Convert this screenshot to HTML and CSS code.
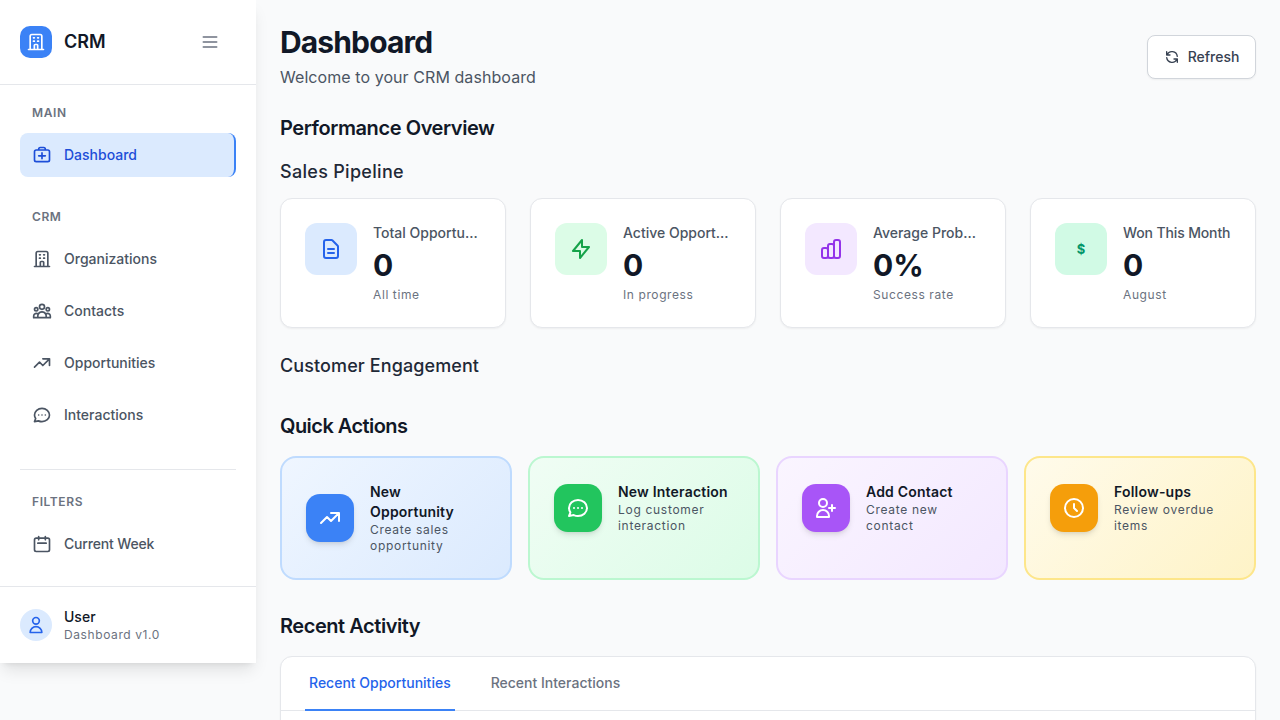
FILE: index.html
```html
<!DOCTYPE html>
<html lang="en">
<head>
<meta charset="utf-8">
<title>CRM Dashboard</title>
<link rel="stylesheet" href="styles.css">
</head>
<body>
<div class="app">
  <aside class="sidebar">
    <div class="brand">
      <div class="brand-left">
        <span class="logo"><svg class="i20" viewBox="0 0 24 24"><path d="M19 21V5a2 2 0 00-2-2H7a2 2 0 00-2 2v16m14 0h2m-2 0h-5m-9 0H3m2 0h5M9 7h1m-1 4h1m4-4h1m-1 4h1m-5 10v-5a1 1 0 011-1h2a1 1 0 011 1v5m-4 0h4"/></svg></span>
        <span class="brand-name">CRM</span>
      </div>
      <svg class="i20 menu" viewBox="0 0 24 24"><path d="M4 6h16M4 12h16M4 18h16"/></svg>
    </div>
    <nav class="nav">
      <div class="nav-label">MAIN</div>
      <a class="nav-item active"><svg class="i20" viewBox="0 0 24 24"><path d="M5 20h14a2 2 0 002-2V8a2 2 0 00-2-2H5a2 2 0 00-2 2v10a2 2 0 002 2zM16 6V5a2 2 0 00-2-2h-4a2 2 0 00-2 2v1M12 9.500v7M8 13h8"/></svg><span class="nav-text">Dashboard</span></a>
      <div class="nav-label crm">CRM</div>
      <a class="nav-item"><svg class="i20" viewBox="0 0 24 24"><path d="M19 21V5a2 2 0 00-2-2H7a2 2 0 00-2 2v16m14 0h2m-2 0h-5m-9 0H3m2 0h5M9 7h1m-1 4h1m4-4h1m-1 4h1m-5 10v-5a1 1 0 011-1h2a1 1 0 011 1v5m-4 0h4"/></svg><span class="nav-text">Organizations</span></a>
      <a class="nav-item"><svg class="i20" viewBox="0 0 24 24"><path d="M17 20h5v-2a3 3 0 00-5.356-1.857M17 20H7m10 0v-2c0-.656-.126-1.283-.356-1.857M7 20H2v-2a3 3 0 015.356-1.857M7 20v-2c0-.656.126-1.283.356-1.857m0 0a5.002 5.002 0 019.288 0M15 7a3 3 0 11-6 0 3 3 0 016 0zm6 3a2 2 0 11-4 0 2 2 0 014 0zM7 10a2 2 0 11-4 0 2 2 0 014 0z"/></svg><span class="nav-text">Contacts</span></a>
      <a class="nav-item"><svg class="i20" viewBox="0 0 24 24"><path d="M13 7h8m0 0v8m0-8l-8 8-4-4-6 6"/></svg><span class="nav-text">Opportunities</span></a>
      <a class="nav-item"><svg class="i20" viewBox="0 0 24 24"><path d="M8 12h.01M12 12h.01M16 12h.01M21 12c0 4.418-4.03 8-9 8a9.863 9.863 0 01-4.255-.949L3 20l1.395-3.72C3.512 15.042 3 13.574 3 12c0-4.418 4.03-8 9-8s9 3.582 9 8z"/></svg><span class="nav-text">Interactions</span></a>
      <div class="nav-sep"></div>
      <div class="nav-label">FILTERS</div>
      <a class="nav-item"><svg class="i20" viewBox="0 0 24 24"><path d="M8 7V3m8 4V3m-9 8h10M5 21h14a2 2 0 002-2V7a2 2 0 00-2-2H5a2 2 0 00-2 2v12a2 2 0 002 2z"/></svg><span class="nav-text week">Current Week</span></a>
    </nav>
    <div class="user">
      <span class="avatar"><svg class="i20" viewBox="0 0 24 24"><path d="M16 7a4 4 0 11-8 0 4 4 0 018 0zM12 14a7 7 0 00-7 7h14a7 7 0 00-7-7z"/></svg></span>
      <div>
        <div class="user-name">User</div>
        <div class="user-sub">Dashboard v1.0</div>
      </div>
    </div>
  </aside>

  <main class="main">
    <header class="page-head">
      <div>
        <h1>Dashboard</h1>
        <p class="subtitle">Welcome to your CRM dashboard</p>
      </div>
      <button class="refresh"><svg class="i16" viewBox="0 0 24 24"><path d="M4 4v5h.582m15.356 2A8.001 8.001 0 004.582 9m0 0H9m11 11v-5h-.581m0 0a8.003 8.003 0 01-15.357-2m15.357 2H15"/></svg>Refresh</button>
    </header>

    <h2 class="overview">Performance Overview</h2>
    <h3 class="pipeline">Sales Pipeline</h3>
    <section class="stats">
      <div class="stat">
        <span class="stat-icon blue"><svg class="i24" viewBox="0 0 24 24"><path d="M9 12h6m-6 4h6m2 5H7a2 2 0 01-2-2V5a2 2 0 012-2h5.586a1 1 0 01.707.293l5.414 5.414a1 1 0 01.293.707V19a2 2 0 01-2 2z"/></svg></span>
        <div class="stat-body"><div class="stat-label">Total Opportunities</div><div class="stat-value">0</div><div class="stat-sub">All time</div></div>
      </div>
      <div class="stat">
        <span class="stat-icon green"><svg class="i24" viewBox="0 0 24 24"><path d="M13 10V3L4 14h7v7l9-11h-7z"/></svg></span>
        <div class="stat-body"><div class="stat-label">Active Opportunities</div><div class="stat-value">0</div><div class="stat-sub">In progress</div></div>
      </div>
      <div class="stat">
        <span class="stat-icon purple"><svg class="i24" viewBox="0 0 24 24"><path d="M9 19v-6a2 2 0 00-2-2H5a2 2 0 00-2 2v6a2 2 0 002 2h2a2 2 0 002-2zm0 0V9a2 2 0 012-2h2a2 2 0 012 2v10m-6 0a2 2 0 002 2h2a2 2 0 002-2m0 0V5a2 2 0 012-2h2a2 2 0 012 2v14a2 2 0 01-2 2h-2a2 2 0 01-2-2z"/></svg></span>
        <div class="stat-body"><div class="stat-label">Average Probability</div><div class="stat-value">0%</div><div class="stat-sub">Success rate</div></div>
      </div>
      <div class="stat">
        <span class="stat-icon teal"><span class="dollar">$</span></span>
        <div class="stat-body"><div class="stat-label tight">Won This Month</div><div class="stat-value">0</div><div class="stat-sub">August</div></div>
      </div>
    </section>

    <h3 class="engagement">Customer Engagement</h3>

    <h2 class="quick">Quick Actions</h2>
    <section class="actions">
      <div class="action a-blue">
        <div class="action-in">
          <span class="action-icon"><svg class="i24" viewBox="0 0 24 24"><path d="M13 7h8m0 0v8m0-8l-8 8-4-4-6 6"/></svg></span>
          <div><div class="action-title">New Opportunity</div><div class="action-sub">Create sales opportunity</div></div>
        </div>
      </div>
      <div class="action a-green">
        <div class="action-in">
          <span class="action-icon"><svg class="i24" viewBox="0 0 24 24"><path d="M8 12h.01M12 12h.01M16 12h.01M21 12c0 4.418-4.03 8-9 8a9.863 9.863 0 01-4.255-.949L3 20l1.395-3.72C3.512 15.042 3 13.574 3 12c0-4.418 4.03-8 9-8s9 3.582 9 8z"/></svg></span>
          <div><div class="action-title">New Interaction</div><div class="action-sub">Log customer interaction</div></div>
        </div>
      </div>
      <div class="action a-purple">
        <div class="action-in">
          <span class="action-icon"><svg class="i24" viewBox="0 0 24 24"><path d="M18 9v3m0 0v3m0-3h3m-3 0h-3m-2-5a4 4 0 11-8 0 4 4 0 018 0zM3 20a6 6 0 0112 0v1H3v-1z"/></svg></span>
          <div><div class="action-title">Add Contact</div><div class="action-sub">Create new contact</div></div>
        </div>
      </div>
      <div class="action a-amber">
        <div class="action-in">
          <span class="action-icon"><svg class="i24" viewBox="0 0 24 24"><path d="M12 8v4l3 3m6-3a9 9 0 11-18 0 9 9 0 0118 0z"/></svg></span>
          <div><div class="action-title">Follow-ups</div><div class="action-sub">Review overdue items</div></div>
        </div>
      </div>
    </section>

    <h2 class="recent">Recent Activity</h2>
    <section class="panel">
      <div class="tabs">
        <span class="tab on">Recent Opportunities</span>
        <span class="tab">Recent Interactions</span>
      </div>
      <div class="panel-body"></div>
    </section>
  </main>
</div>
</body>
</html>
```
FILE: styles.css
```css
* { box-sizing: border-box; }
html, body { margin: 0; height: 720px; overflow: hidden; }
body { background: #f9fafb; font-family: Inter, "Liberation Sans", sans-serif; color: #111827; }
svg { fill: none; stroke: currentColor; stroke-width: 2; stroke-linecap: round; stroke-linejoin: round; flex: none; display: block; }
.i16 { width: 16px; height: 16px; }
.i20 { width: 20px; height: 20px; }
.i24 { width: 24px; height: 24px; }

.app { display: flex; height: 720px; align-items: flex-start; }

.sidebar { width: 256px; flex: none; background: #fff; box-shadow: 0 10px 15px -3px rgba(0,0,0,.1), 0 4px 6px -4px rgba(0,0,0,.1); display: flex; flex-direction: column; }
.brand { height: 85px; padding: 0 36px 0 20px; display: flex; align-items: center; justify-content: space-between; border-bottom: 1px solid #e5e7eb; }
.brand-left { display: flex; align-items: center; gap: 12px; }
.logo { width: 32px; height: 32px; border-radius: 10px; background: #3b82f6; color: #fff; display: flex; align-items: center; justify-content: center; }
.brand-name { font-size: 18px; font-weight: 600; line-height: 28px; }
.menu { color: #6b7280; }

.nav { padding: 20px 20px 12px; }
.nav-label { font-size: 12px; line-height: 16px; font-weight: 600; letter-spacing: .6px; color: #6b7280; padding-left: 12px; margin-bottom: 12px; }
.nav-label.crm { margin-top: 32px; }
.nav-item { height: 44px; display: flex; align-items: center; gap: 12px; padding: 0 12px; margin-bottom: 8px; border-radius: 8px; font-size: 14px; font-weight: 500; color: #4b5563; }
.nav-text { line-height: 20px; margin-bottom: 0; }
.nav-text.week { letter-spacing: -.16px; }
.nav-item.active { background: #dbeafe; color: #1d4ed8; border-right: 2px solid #3b82f6; }
.nav-sep { height: 1px; background: #e5e7eb; margin: 32px 0 24px; }

.user { border-top: 1px solid #e5e7eb; padding: 20px; display: flex; align-items: center; gap: 12px; }
.avatar { width: 32px; height: 32px; border-radius: 50%; background: #dbeafe; color: #2563eb; display: flex; align-items: center; justify-content: center; }
.user-name { font-size: 14px; line-height: 20px; font-weight: 500; }
.user-sub { font-size: 12px; line-height: 16px; color: #6b7280; letter-spacing: .6px; }

.main { flex: 1; min-width: 0; padding: 24px; }
.page-head { display: flex; align-items: center; justify-content: space-between; margin-bottom: 25px; }
h1 { margin: 0 0 5px; font-size: 30px; line-height: 36px; font-weight: 700; letter-spacing: -.86px; }
.subtitle { margin: 0; font-size: 16px; line-height: 24px; color: #4b5563; letter-spacing: .07px; }
.refresh { height: 44px; width: 109px; display: flex; align-items: center; justify-content: center; gap: 8px; background: #fff; border: 1px solid #d1d5db; border-radius: 8px; box-shadow: 0 1px 2px rgba(0,0,0,.05); color: #374151; font: 500 14px/20px Inter, "Liberation Sans", sans-serif; }

h2 { margin: 0; font-size: 20px; line-height: 28px; font-weight: 600; letter-spacing: -.45px; }
h3 { margin: 0; font-size: 18px; line-height: 28px; font-weight: 500; color: #1f2937; }
.overview { margin-bottom: 16px; letter-spacing: -.42px; }
.pipeline { letter-spacing: .3px; }

.stats { display: grid; grid-template-columns: repeat(4, minmax(0, 1fr)); gap: 24px; margin-top: 12px; }
.stat { display: flex; gap: 16px; padding: 24px; background: #fff; border: 1px solid #e5e7eb; border-radius: 12px; box-shadow: 0 1px 2px rgba(0,0,0,.05); }
.stat-icon { width: 52px; height: 52px; flex: none; border-radius: 12px; display: flex; align-items: center; justify-content: center; }
.blue { background: #dbeafe; color: #2563eb; }
.green { background: #dcfce7; color: #16a34a; }
.purple { background: #f3e8ff; color: #9333ea; }
.teal { background: #d1fae5; color: #059669; }
.dollar { font-size: 13px; font-weight: 700; line-height: 20px; }
.stat-body { flex: 1; min-width: 0; }
.stat-label { font-size: 14px; line-height: 20px; font-weight: 500; color: #4b5563; white-space: nowrap; overflow: hidden; text-overflow: ellipsis; }
.stat-label.tight { letter-spacing: -.13px; }
.stat-value { font-size: 30px; line-height: 36px; font-weight: 700; margin: 4px 0; }
.stat-sub { font-size: 12px; line-height: 16px; color: #6b7280; letter-spacing: .6px; }

.engagement { margin-top: 24px; letter-spacing: .1px; }
.quick { margin-top: 32px; letter-spacing: -.55px; }
.actions { display: grid; grid-template-columns: repeat(4, minmax(0, 1fr)); gap: 16px; margin-top: 16px; }
.action { padding: 24px; border: 2px solid; border-radius: 16px; }
.action-in { display: flex; align-items: center; gap: 16px; }
.action-icon { width: 48px; height: 48px; flex: none; border-radius: 14px; color: #fff; display: flex; align-items: center; justify-content: center; box-shadow: 0 4px 6px -1px rgba(0,0,0,.1), 0 2px 4px -2px rgba(0,0,0,.1); }
.action-title { font-size: 14px; line-height: 20px; font-weight: 600; letter-spacing: .2px; }
.action-sub { font-size: 12px; line-height: 16px; color: #4b5563; letter-spacing: .7px; }
.a-blue { background: linear-gradient(135deg, #eff6ff, #dbeafe); border-color: #bfdbfe; }
.a-blue .action-icon { background: #3b82f6; }
.a-green { background: linear-gradient(135deg, #f0fdf4, #dcfce7); border-color: #bbf7d0; }
.a-green .action-icon { background: #22c55e; }
.a-purple { background: linear-gradient(135deg, #faf5ff, #f3e8ff); border-color: #e9d5ff; }
.a-purple .action-icon { background: #a855f7; }
.a-amber { background: linear-gradient(135deg, #fffbeb, #fef3c7); border-color: #fde68a; }
.a-amber .action-icon { background: #f59e0b; }

.recent { margin-top: 32px; }
.panel { margin-top: 16px; background: #fff; border: 1px solid #e5e7eb; border-radius: 12px; box-shadow: 0 1px 2px rgba(0,0,0,.05); }
.tabs { display: flex; gap: 32px; padding: 0 24px; height: 54px; border-bottom: 1px solid #e5e7eb; }
.tab { padding: 0 4px; height: 54px; line-height: 52px; font-size: 14px; font-weight: 500; color: #6b7280; border-bottom: 2px solid transparent; }
.tab.on { color: #2563eb; border-bottom-color: #3b82f6; }
.panel-body { height: 200px; }
```
